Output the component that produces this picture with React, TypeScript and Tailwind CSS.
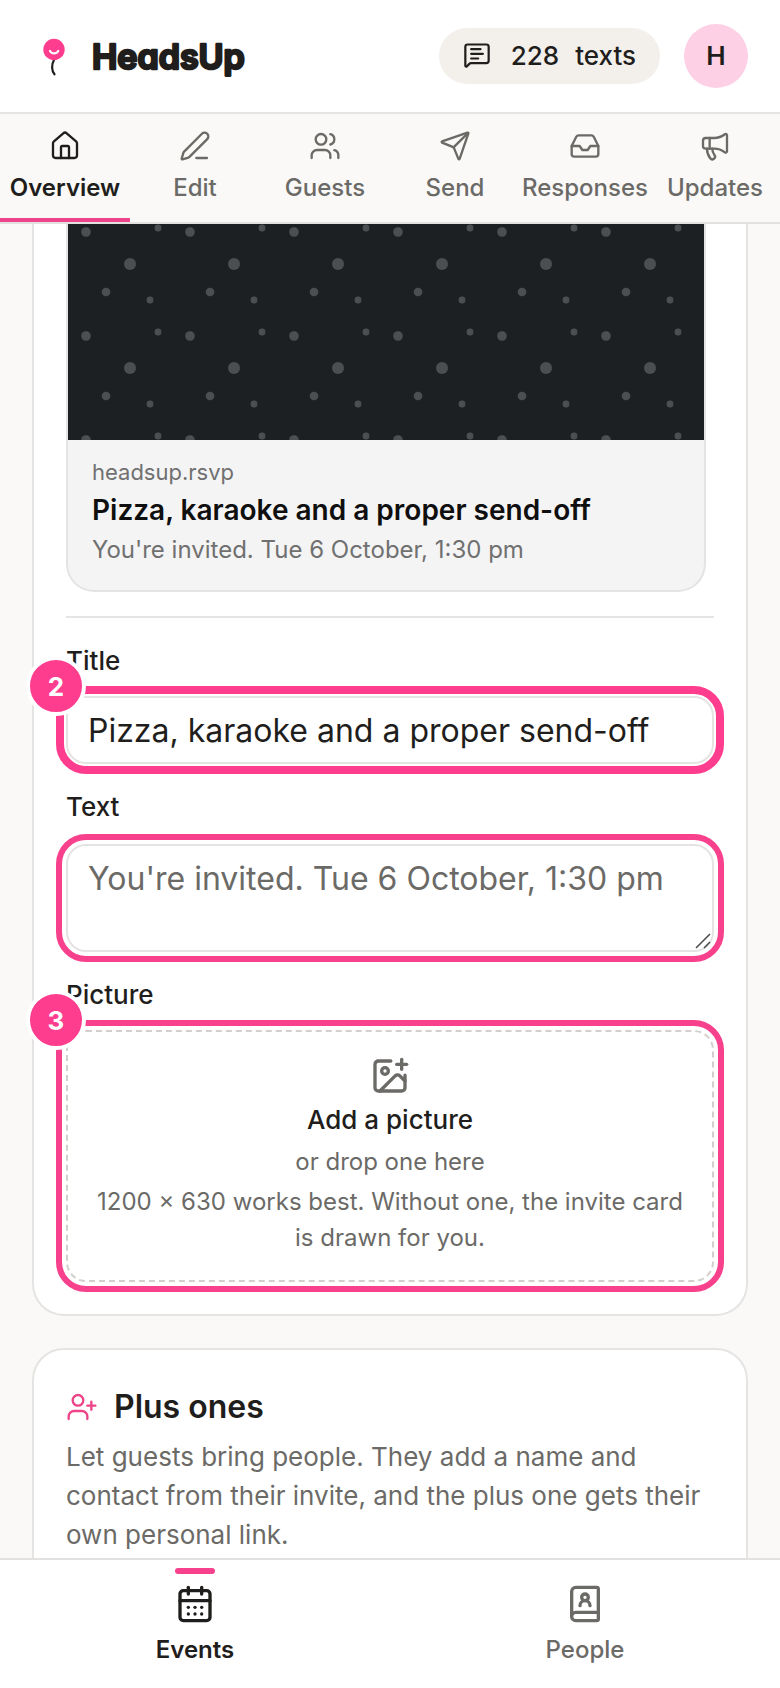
import { ReactNode, useState } from "react";
import {
  BookUser,
  CalendarDays,
  House,
  ImagePlus,
  Inbox,
  Megaphone,
  MessageSquareText,
  PenLine,
  Send,
  UserPlus,
  Users
} from "lucide-react";
import type { LucideIcon } from "lucide-react";

type Tab = { label: string; icon: LucideIcon };

const TABS: Tab[] = [
  { label: "Overview", icon: House },
  { label: "Edit", icon: PenLine },
  { label: "Guests", icon: Users },
  { label: "Send", icon: Send },
  { label: "Responses", icon: Inbox },
  { label: "Updates", icon: Megaphone }
];

const SECTIONS: Tab[] = [
  { label: "Events", icon: CalendarDays },
  { label: "People", icon: BookUser }
];

function Logo() {
  return (
    <a className="flex items-center gap-4" href="#home">
      <svg aria-hidden="true" className="size-11" fill="none" viewBox="0 0 44 44">
        <path d="M22 26c-2.6 4.500-2.600 10.500.5 14.300" stroke="#1c1c1a" strokeLinecap="round" strokeWidth="2.200" />
        <circle cx="22" cy="15.500" fill="#ff3d8f" r="10.700" />
        <path d="M18 17c1.800 3.200 6.400 3.200 8.200 0" stroke="#fff" strokeLinecap="round" strokeWidth="2.200" />
      </svg>
      <svg aria-label="HeadsUp" className="h-14 w-40" role="img" viewBox="0 0 160 56">
        <text
          className="fill-[#1f1e1c] stroke-[#1f1e1c] font-['Inter',sans-serif] text-[34px] font-semibold [font-feature-settings:'cv11']"
          strokeLinejoin="round"
          strokeWidth="2.600"
          x="0"
          y="41"
        >
          HeadsUp
        </text>
      </svg>
    </a>
  );
}

function Header() {
  return (
    <header className="flex shrink-0 items-center justify-between border-b-2 border-[#e5e4e2] bg-white px-8 py-6">
      <Logo />
      <div className="flex items-center gap-6">
        <button className="flex h-14 items-center gap-4 rounded-full bg-[#f3f0ec] px-6 pb-0.5 text-[26px] font-medium" type="button">
          <MessageSquareText className="mr-1 size-7" strokeWidth={1.9} />
          <span>228</span>
          <span>texts</span>
        </button>
        <button className="size-16 rounded-full bg-[#fdd0e5] pb-0.5 text-[26px] font-semibold" type="button">H</button>
      </div>
    </header>
  );
}

function TabBar() {
  const [active, setActive] = useState("Overview");
  return (
    <nav className="grid shrink-0 grid-cols-6 border-b-2 border-[#e2e1df] bg-[#faf9f7]">
      {TABS.map(({ label, icon: Icon }) => (
        <button
          className={`flex flex-col items-center gap-2 border-b-4 pt-4 pb-3 text-2xl leading-9 ${
            active === label
              ? "border-[#ee4489] font-semibold text-[#1f1e1c]"
              : "border-transparent font-medium text-[#6b6a67]"
          }`}
          key={label}
          onClick={() => setActive(label)}
          type="button"
        >
          <Icon className="size-8" strokeWidth={1.75} />
          {label}
        </button>
      ))}
    </nav>
  );
}

function InviteArt() {
  return (
    <svg aria-hidden="true" className="block h-[216px] w-full bg-[#1d2023]">
      <defs>
        <pattern height="104" id="confetti" patternUnits="userSpaceOnUse" width="104">
          <g fill="#4c4f52">
            <circle cx="18" cy="8" r="4.800" />
            <circle cx="90" cy="4" r="3.400" />
            <circle cx="62" cy="40" r="6" />
            <circle cx="38" cy="68" r="4.300" />
            <circle cx="82" cy="76" r="3.400" />
          </g>
        </pattern>
      </defs>
      <rect fill="url(#confetti)" height="100%" width="100%" />
    </svg>
  );
}

function Step({ children }: { children: ReactNode }) {
  return (
    <span className="absolute -top-10 -left-10 z-10 flex size-15 items-center justify-center rounded-full border-4 border-white bg-[#ff3d8f] text-[26px] font-bold text-white">
      {children}
    </span>
  );
}

function SharePreview() {
  const [title, setTitle] = useState("Pizza, karaoke and a proper send-off");
  const [text, setText] = useState("");

  return (
    <section className="rounded-b-[32px] border-2 border-t-0 border-[#e5e4e2] bg-white px-8 pb-8">
      <article className="max-w-[640px] overflow-hidden rounded-b-[28px] border-2 border-t-0 border-[#e5e4e2] bg-[#f4f4f5]">
        <InviteArt />
        <div className="px-6 pt-4 pb-[22px]">
          <p className="text-[22px] leading-8 text-[#707070]">headsup.rsvp</p>
          <h2 className="text-[28px] leading-11 font-semibold text-[#0f0f0f]">{title}</h2>
          <p className="text-2xl leading-9 text-[#707070]">You're invited. Tue 6 October, 1:30 pm</p>
        </div>
      </article>

      <div className="mt-6 border-t-2 border-[#e5e4e2] pt-6">
        <label className="block text-[26px] leading-[38px] font-medium" htmlFor="share-title">Title</label>
        <div className="relative mt-4">
          <Step>2</Step>
          <input
            className="block h-17 w-full rounded-[20px] border-2 border-[#e5e4e2] bg-white px-5 text-[32px] outline-8 outline-offset-2 outline-[#ff3d8f]"
            id="share-title"
            onChange={(e) => setTitle(e.target.value)}
            value={title}
          />
        </div>
      </div>

      <div className="mt-6">
        <label className="block text-[26px] leading-[38px] font-medium" htmlFor="share-text">Text</label>
        <div className="relative mt-[18px]">
          <textarea
            className="block h-27 w-full rounded-[20px] border-2 border-[#e5e4e2] bg-white px-5 py-[11px] text-[32px] leading-11 outline-6 outline-offset-4 outline-[#f8418d] placeholder:text-[#6b6a67] [&::-webkit-resizer]:hidden"
            id="share-text"
            onChange={(e) => setText(e.target.value)}
            placeholder="You're invited. Tue 6 October, 1:30 pm"
            value={text}
          />
          <svg aria-hidden="true" className="pointer-events-none absolute right-0.5 bottom-0.5 size-[18px]" viewBox="0 0 18 18">
            <path d="M2 16 16 2M10 16l6-6" fill="none" stroke="#4a4a4a" strokeWidth="1.500" />
          </svg>
        </div>
      </div>

      <div className="mt-6">
        <p className="text-[26px] leading-[38px] font-medium">Picture</p>
        <div className="relative mt-4">
          <Step>3</Step>
          <button
            className="flex w-full flex-col items-center gap-1 rounded-[20px] border-2 border-dashed border-[#d3d0cc] px-6 py-6 text-2xl leading-9 text-[#6b6a67] outline-6 outline-offset-4 outline-[#f8418d]"
            type="button"
          >
            <ImagePlus className="size-10" strokeWidth={2} />
            <span className="text-[26px] leading-10 font-medium text-[#1f1e1c]">Add a picture</span>
            <span>or drop one here</span>
            <span>1200 × 630 works best. Without one, the invite card is drawn for you.</span>
          </button>
        </div>
      </div>
    </section>
  );
}

function PlusOnes() {
  return (
    <section className="rounded-[32px] border-2 border-[#e5e4e2] bg-white p-8">
      <h2 className="flex items-center gap-4 text-[32px] leading-[50px] font-semibold">
        <UserPlus className="size-8 text-[#ee4489]" strokeWidth={1.75} />
        Plus ones
      </h2>
      <p className="mt-[5px] text-[26px] leading-[39px] text-[#6b6a67]">
        Let guests bring people. They add a name and contact from their invite, and the plus one gets their own
        personal link.
      </p>
    </section>
  );
}

function BottomNav() {
  const [active, setActive] = useState("Events");
  return (
    <nav className="grid shrink-0 grid-cols-2 border-t-2 border-[#e2e1df] bg-white">
      {SECTIONS.map(({ label, icon: Icon }) => (
        <button
          className={`relative flex flex-col items-center gap-2 pt-6 pb-5 text-2xl leading-9 ${
            active === label ? "font-semibold text-[#1f1e1c]" : "font-medium text-[#6b6a67]"
          }`}
          key={label}
          onClick={() => setActive(label)}
          type="button"
        >
          {active === label ? <span className="absolute top-2 h-1.5 w-10 rounded-full bg-[#f8418d]" /> : null}
          <Icon className="size-10" strokeWidth={2} />
          {label}
        </button>
      ))}
    </nav>
  );
}

export default function App() {
  return (
    <div className="flex h-screen flex-col bg-[#faf9f7] font-['Inter','Liberation_Sans',sans-serif] text-[#1f1e1c]">
      <Header />
      <TabBar />
      <main className="flex min-h-0 flex-1 flex-col gap-8 overflow-y-auto px-8 pb-8 [scrollbar-width:none] [&>section]:shrink-0">
        <SharePreview />
        <PlusOnes />
      </main>
      <BottomNav />
    </div>
  );
}
